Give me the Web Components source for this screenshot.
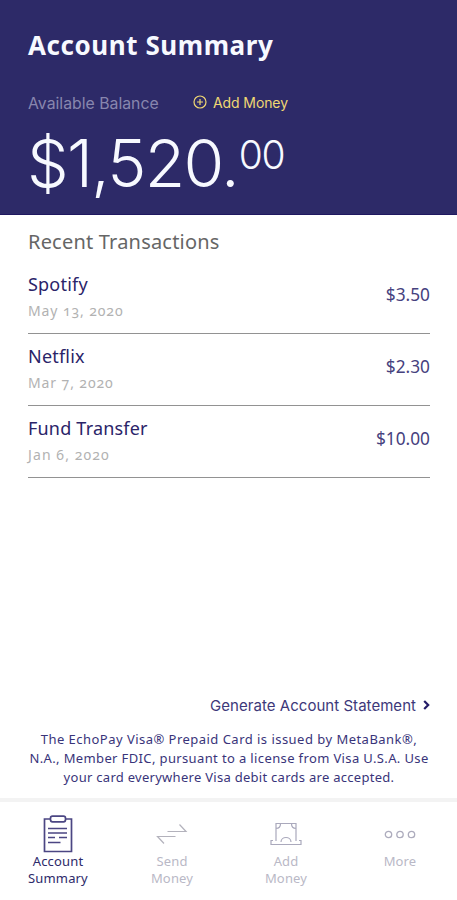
<!DOCTYPE html>
<html lang="en">
<head>
<meta charset="utf-8">
<title>Account Summary</title>
<style>
html,body{margin:0;height:100%}
body{background:#fff;font-family:"Noto Sans","Open Sans",sans-serif;--ink:#2d2a6a;--pale:#b9b8c6}
</style>
</head>
<body>
<account-app></account-app>
<script>
const define=(name,html)=>customElements.define(name,class extends HTMLElement{
  constructor(){
    super();
    const t=document.createElement('template');
    t.innerHTML=html;
    this.attachShadow({mode:'open'}).append(t.content.cloneNode(true));
  }
});

define('balance-header',`
<style>
:host{display:block;box-sizing:border-box;height:215px;padding:27px 28px 0;background:#2d2a68;color:#f7f9ff;border-bottom:1px solid #1f1860}
h1{margin:0;font-size:26px;line-height:36px;font-weight:700;letter-spacing:.56px}
.row{display:flex;align-items:center;margin-top:29px;height:22px;font-family:Inter,sans-serif;white-space:nowrap}
.label{width:165px;font-size:15.8px;color:#8886ae}
.add{display:flex;align-items:center;gap:6px;color:#f0d773;font-size:14px;letter-spacing:-.1px;margin-top:-2px}
.amount{display:flex;align-items:flex-start;font-family:Inter,sans-serif;font-weight:300;white-space:nowrap;margin-top:9px}
.whole{font-size:66px;line-height:80px;letter-spacing:-1.7px;margin-left:-1px}
.cents{font-size:39px;line-height:48px;letter-spacing:-1.5px;margin:8px 0 0 1px}
</style>
<h1><slot name="title"></slot></h1>
<div class="row"><span class="label"><slot name="label"></slot></span>
<span class="add"><svg width="14" height="14" viewBox="0 0 14 14" fill="none" stroke="currentColor" stroke-width="1.2"><circle cx="7" cy="7" r="6"/><path d="M7 4v6M4 7h6"/></svg><slot name="action"></slot></span></div>
<div class="amount"><span class="whole"><slot name="whole"></slot></span><span class="cents"><slot name="cents"></slot></span></div>`);

define('transaction-row',`
<style>
:host{display:flex;box-sizing:border-box;height:72px;justify-content:space-between;border-bottom:1px solid #929292;color:#2a2469}
.name{font-size:18px;line-height:26px;letter-spacing:.2px;margin-top:9px}
.date{font-size:14px;line-height:20px;letter-spacing:.9px;margin-top:4px;color:#b2b2b2;font-variant-numeric:oldstyle-nums}
.sum{font-size:17.3px;line-height:24px;margin-top:21px;color:#46417e}
</style>
<div><div class="name"><slot></slot></div><div class="date"><slot name="date"></slot></div></div>
<div class="sum"><slot name="sum"></slot></div>`);

define('statement-link',`
<style>
:host{display:flex;justify-content:flex-end;align-items:center;gap:7px;height:22px;font-family:Inter,sans-serif;font-size:15px;letter-spacing:.04px;color:#3d387a;white-space:nowrap}
</style>
<slot></slot><svg width="7" height="10" viewBox="0 0 7 10" fill="none" stroke="#241c68" stroke-width="2.2"><path d="M1.2 1 5.2 5 1.2 9"/></svg>`);

define('legal-note',`
<style>
:host{display:block;text-align:center;font-size:13px;line-height:19px;color:#39347a;white-space:nowrap}
::slotted(span){display:block;letter-spacing:var(--track)}
</style><slot></slot>`);

define('tab-item',`
<style>
:host{display:flex;flex-direction:column;align-items:center;width:114px;color:var(--pale);font-size:13px;line-height:17px;text-align:center}
:host([active]){color:var(--ink)}
.icon{display:flex;align-items:center;justify-content:center;height:38px}
.text{width:66px;letter-spacing:.15px}
</style>
<div class="icon"><slot name="icon"></slot></div><div class="text"><slot></slot></div>`);

define('tab-bar',`
<style>
:host{display:flex;box-sizing:border-box;height:102px;padding:13px 0 0 1px;border-top:4px solid #f3f3f3;background:#fff}
</style><slot></slot>`);

define('account-app',`
<style>
:host{display:flex;flex-direction:column;height:900px;width:457px;overflow:hidden}
main{flex:1;display:flex;flex-direction:column;padding:0 27px 0 28px}
h2{margin:14px 0 7px;font-size:20px;line-height:26px;font-weight:400;letter-spacing:.2px;color:#666}
statement-link{margin-top:auto}
legal-note{margin:14px -10px 11px -10px}
</style>
<balance-header><span slot="title">Account Summary</span><span slot="label">Available Balance</span><span slot="action">Add Money</span><span slot="whole">$1,520.</span><span slot="cents">00</span></balance-header>
<main>
<h2>Recent Transactions</h2>
<transaction-row>Spotify<span slot="date">May 13, 2020</span><span slot="sum">$3.50</span></transaction-row>
<transaction-row>Netflix<span slot="date">Mar 7, 2020</span><span slot="sum">$2.30</span></transaction-row>
<transaction-row>Fund Transfer<span slot="date" style="letter-spacing:1.1px">Jan 6, 2020</span><span slot="sum">$10.00</span></transaction-row>
<statement-link>Generate Account Statement</statement-link>
<legal-note><span style="--track:.47px">The EchoPay Visa® Prepaid Card is issued by MetaBank®,</span><span style="--track:.37px">N.A., Member FDIC, pursuant to a license from Visa U.S.A. Use</span><span style="--track:.28px">your card everywhere Visa debit cards are accepted.</span></legal-note>
</main>
<tab-bar>
<tab-item active><svg slot="icon" width="30" height="38" viewBox="0 0 30 38" fill="none" stroke="#4b4683" stroke-width="1.7"><path d="M8 4H1.5v32.500h27V4H22"/><rect x="7.500" y="1.200" width="15" height="5.600" rx="2"/><path d="M5 13.500h19M5 18h19M5 22.500h7M16 22.500h8M5 27.500h12.500"/></svg>Account Summary</tab-item>
<tab-item><svg slot="icon" width="32" height="22" viewBox="0 0 32 22" fill="none" stroke="#b3b2bc" stroke-width="1.2"><path d="M11.500 8.500H30L23.500 1.500M19.500 13.500H1.500L8 20.500"/></svg>Send Money</tab-item>
<tab-item><svg slot="icon" width="32" height="24" viewBox="0 0 32 24" fill="none" stroke="#aaa9bc" stroke-width="1.2"><path d="M6 19V1.500h20V19M6 6.500c3 0 4.500-2 4.500-5M26 6.500c-3 0-4.500-2-4.500-5M11 20c0-6 10-6 10 0M3 18.500H1V22.500h30v-4h-2"/></svg>Add Money</tab-item>
<tab-item><svg slot="icon" width="32" height="9" viewBox="0 0 32 9" fill="none" stroke="#adacbd" stroke-width="1.300"><circle cx="4.500" cy="4.500" r="3.200"/><circle cx="16" cy="4.500" r="3.200"/><circle cx="27.500" cy="4.500" r="3.200"/></svg>More</tab-item>
</tab-bar>`);
</script>
</body>
</html>
